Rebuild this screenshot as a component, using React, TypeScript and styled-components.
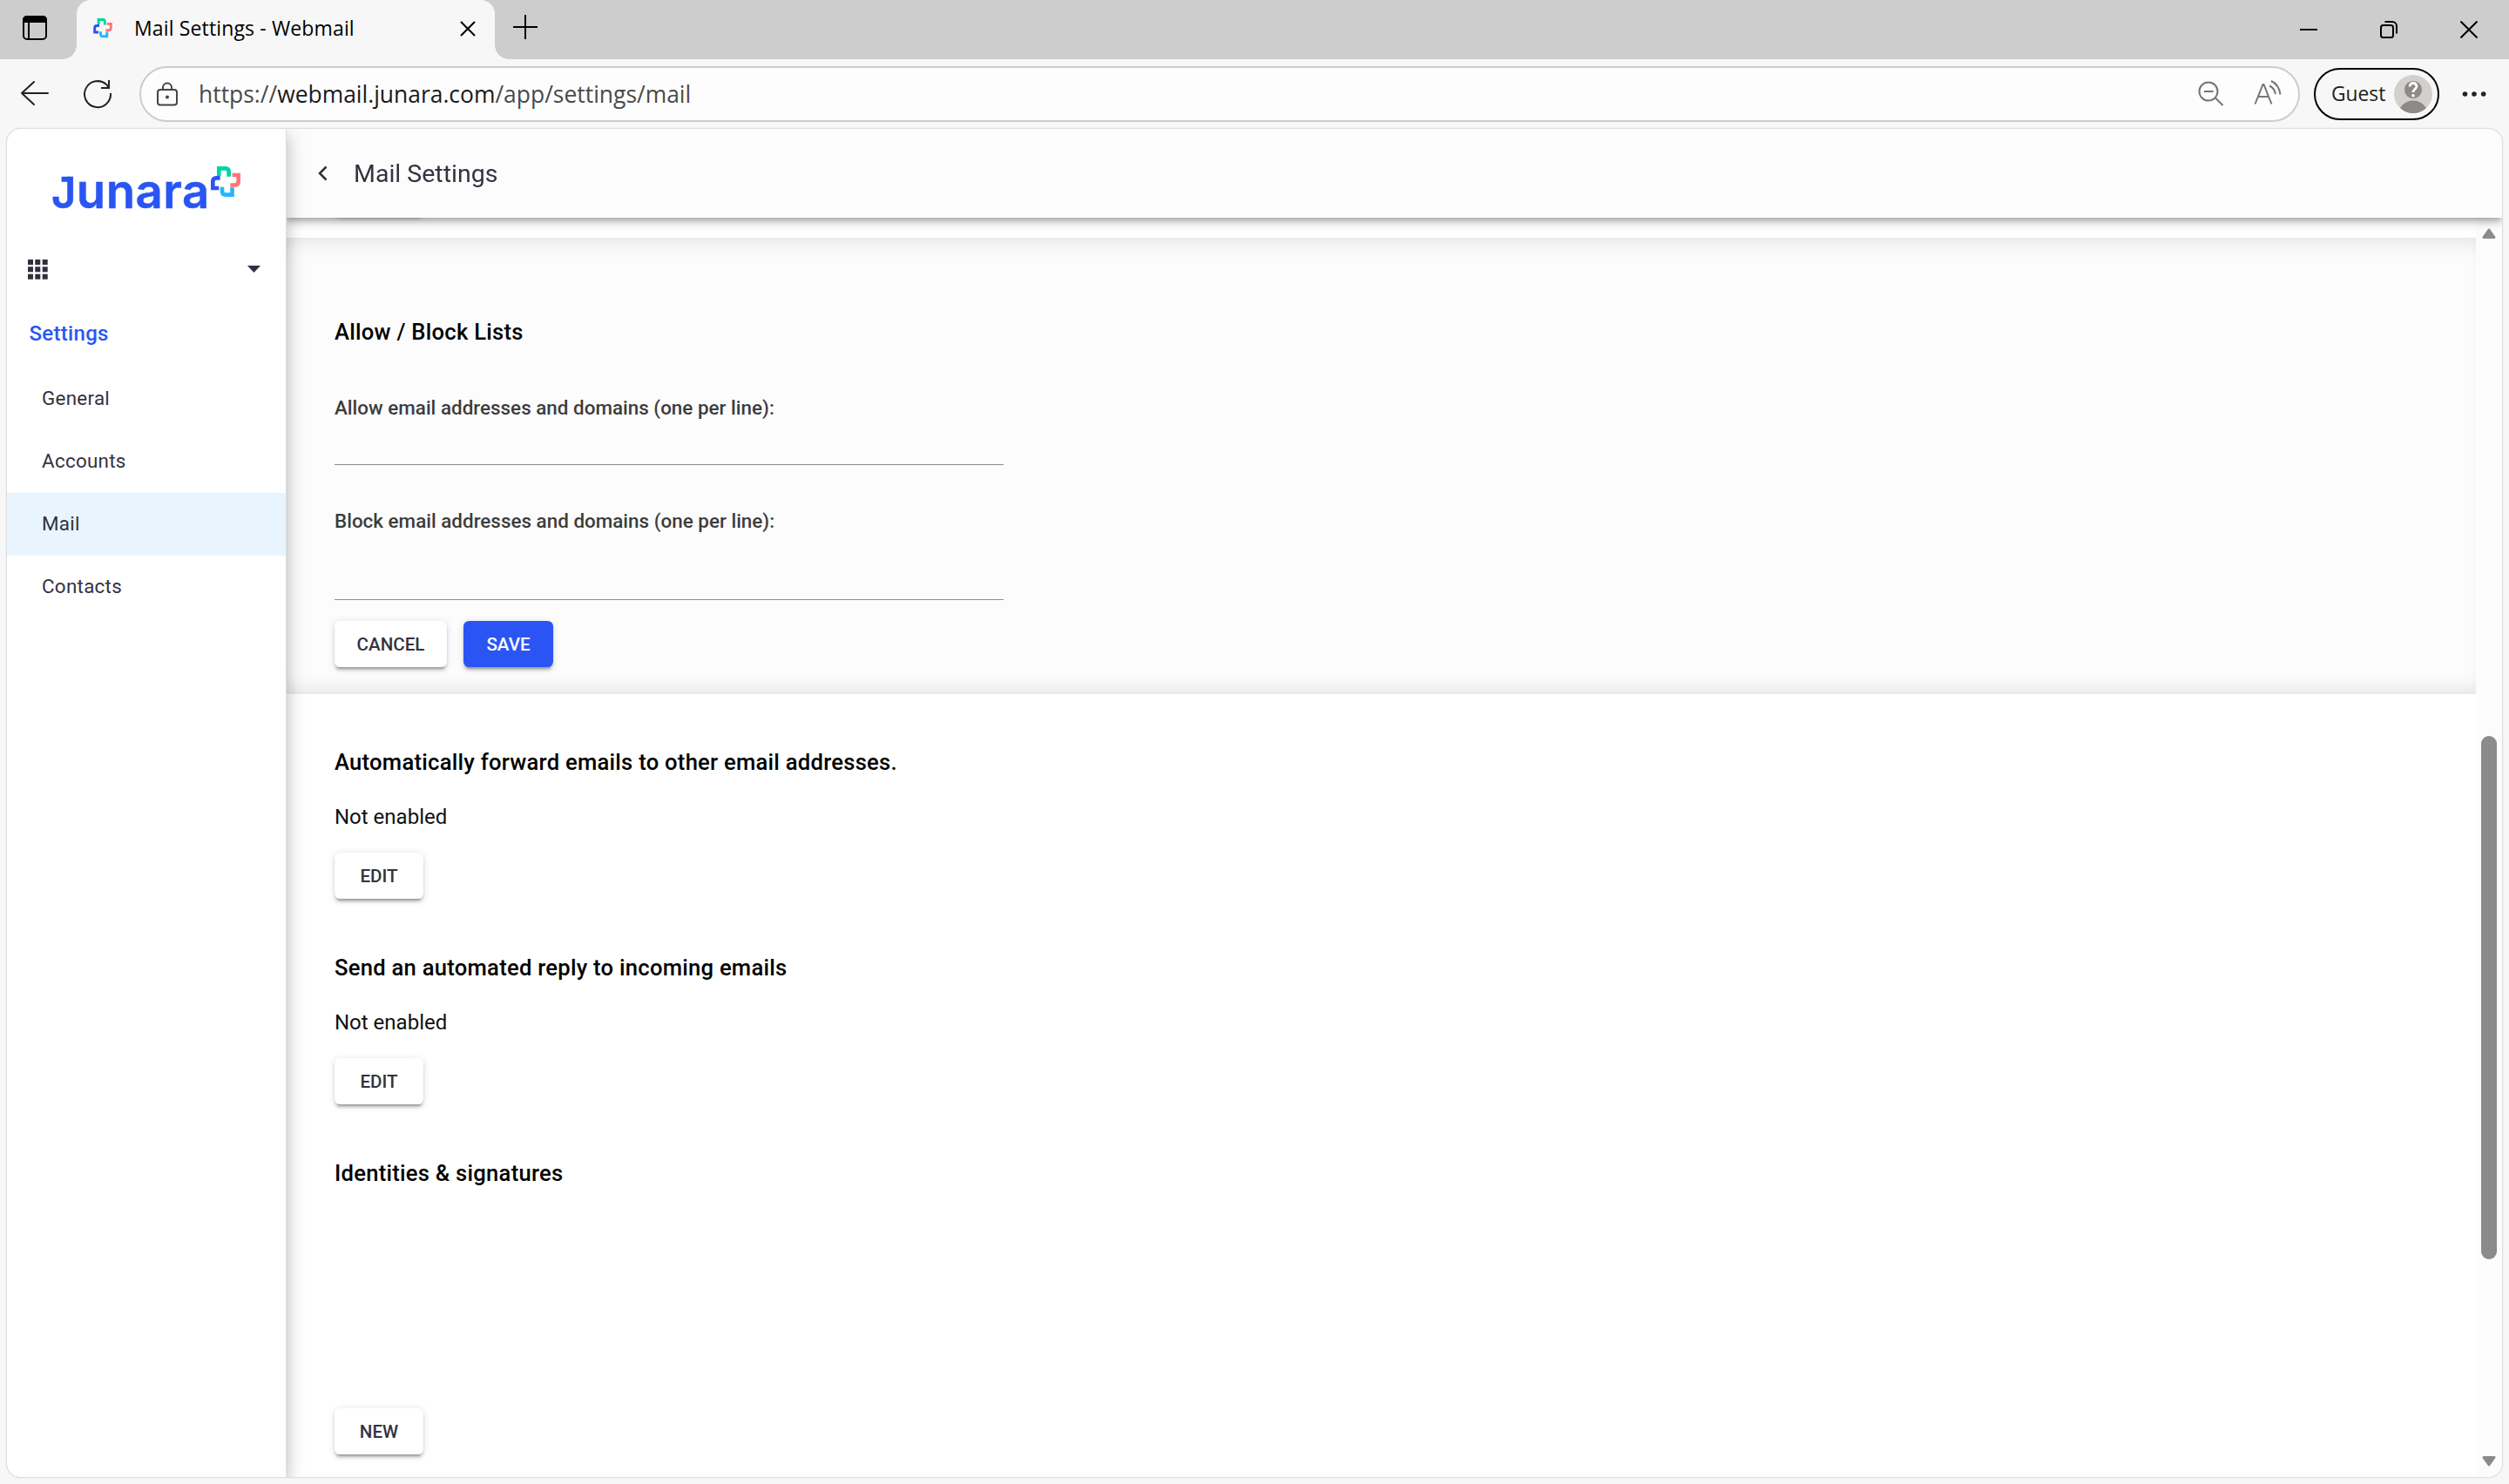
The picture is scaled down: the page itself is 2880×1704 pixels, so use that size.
import React from "react";
import styled, { createGlobalStyle, css } from "styled-components";

const ui = `Roboto, "Liberation Sans", sans-serif`;
const chrome = `"Open Sans", "Noto Sans", "Liberation Sans", sans-serif`;

const GlobalStyle = createGlobalStyle`
  *, *::before, *::after { box-sizing: border-box; }
  html, body { margin: 0; padding: 0; }
  body { width: 2880px; height: 1704px; overflow: hidden; background: #f7f7f7; }
  button, input { font: inherit; margin: 0; }
`;

const Window = styled.div`
  display: flex;
  flex-direction: column;
  width: 2880px;
  height: 1704px;
  background: #f7f7f7;
  font-family: ${ui};
`;

/* ---------- title bar ---------- */
const TitleBar = styled.div`
  display: flex;
  height: 68px;
  background: #cdcdcd;
  color: #000;
`;
const TabActions = styled.div`
  width: 88px;
  padding: 18px 0 0 26px;
`;
const Tab = styled.div`
  position: relative;
  display: flex;
  width: 480px;
  height: 68px;
  background: #f7f7f7;
  border-radius: 16px 16px 0 0;
  &::before, &::after {
    content: "";
    position: absolute;
    bottom: 0;
    width: 16px;
    height: 16px;
  }
  &::before { left: -16px; background: radial-gradient(circle at 0 0, transparent 15.5px, #f7f7f7 16px); }
  &::after { right: -16px; background: radial-gradient(circle at 100% 0, transparent 15.5px, #f7f7f7 16px); }
`;
const TabIcon = styled.div`
  width: 66px;
  padding: 21px 0 0 18.5px;
`;
const TabTitle = styled.div`
  flex: 1;
  font: 400 23px/64px ${chrome};
  letter-spacing: 0.14px;
  white-space: nowrap;
`;
const TabClose = styled.div`
  width: 40px;
  padding-top: 24px;
`;
const NewTab = styled.div`
  flex: 1;
  padding: 16px 0 0 20px;
`;
const WindowControls = styled.div`
  display: flex;
  gap: 72px;
  padding: 24px 36px 0 0;
`;

/* ---------- address bar ---------- */
const Toolbar = styled.div`
  display: flex;
  align-items: center;
  height: 80px;
  padding: 0 18px 0 22px;
  color: #222;
`;
const NavIcon = styled.div<{ $gap: number }>`
  display: flex;
  width: 36px;
  margin-right: ${(p) => p.$gap}px;
`;
const AddressBar = styled.div`
  display: flex;
  align-items: center;
  width: 2480px;
  height: 64px;
  padding: 0 19px 0 17px;
  border: 2px solid #cdcdcd;
  border-radius: 32px;
  background: #fdfdfd;
  color: #757575;
`;
const Url = styled.div`
  flex: 1;
  margin-left: 23px;
  font: 400 26.45px/60px ${chrome};
  color: #4a4a4a;
  white-space: nowrap;
`;
const Domain = styled.span`
  color: #1a1a1a;
`;
const Profile = styled.div`
  display: flex;
  align-items: center;
  justify-content: space-between;
  width: 144px;
  height: 60px;
  margin-left: 16px;
  padding: 0 6px 0 18px;
  border: 2px solid #000;
  border-radius: 30px;
  font: 400 22.8px/56px ${chrome};
  color: #222;
`;
const MoreIcon = styled.div`
  display: flex;
  margin-left: 26px;
`;

/* ---------- page ---------- */
const Page = styled.div`
  display: flex;
  width: 2864px;
  height: 1548px;
  margin: 0 8px;
  border-radius: 16px;
  overflow: hidden;
  background: #fff;
`;
const PageFrame = styled.div`
  width: 2880px;
  height: 1556px;
  filter: drop-shadow(0 0 1px rgba(0, 0, 0, 0.28));
`;
const Sidebar = styled.aside`
  position: relative;
  z-index: 3;
  width: 320px;
  background: #fff;
  box-shadow: 1px 0 0 #dedede, 0 8px 8px -4.8px rgba(0, 0, 0, 0.2),
    0 12.8px 16px 1.6px rgba(0, 0, 0, 0.14), 0 4.8px 22.4px 3.2px rgba(0, 0, 0, 0.12);
`;
const LogoBox = styled.div`
  height: 125px;
  padding: 32px 0 0 42px;
`;
const AppSwitcher = styled.div`
  display: flex;
  align-items: center;
  justify-content: space-between;
  height: 72px;
  padding: 0 29px 0 24px;
`;
const NavTitle = styled.div`
  height: 77px;
  padding-left: 25.5px;
  font-size: 24px;
  font-weight: 500;
  line-height: 76px;
  letter-spacing: 0.3px;
  color: #2a55f4;
`;
const NavItem = styled.div<{ $active?: boolean }>`
  height: 72px;
  padding-left: 40px;
  font-size: 22.4px;
  line-height: 71px;
  letter-spacing: 0.28px;
  color: #33333f;
  background: ${(p) => (p.$active ? "#e8f5fe" : "transparent")};
`;
const Main = styled.main`
  display: flex;
  flex-direction: column;
  width: 2544px;
`;
const Header = styled.header`
  position: relative;
  z-index: 2;
  display: flex;
  align-items: center;
  height: 102px;
  padding-left: 36px;
  background: #fcfcfc;
  box-shadow: 0 3.2px 6.4px -1.6px rgba(0, 0, 0, 0.2), 0 6.4px 8px 0 rgba(0, 0, 0, 0.14),
    0 1.6px 16px 0 rgba(0, 0, 0, 0.12);
`;
const HeaderTitle = styled.h1`
  margin: 2px 0 0 28px;
  font-size: 28.5px;
  font-weight: 400;
  line-height: 100px;
  color: #33333f;
`;
const Body = styled.div`
  display: flex;
  height: 1446px;
`;
const Content = styled.div`
  width: 2514px;
  overflow: hidden;
`;
const ScrolledOff = styled.div`
  display: flow-root;
  height: 23px;
  padding-left: 56px;
`;
const Panel = styled.section`
  height: 524px;
  padding: 88px 0 0 56px;
  background: #fcfcfc;
  box-shadow: inset 0 18px 26px -18px rgba(0, 0, 0, 0.15), inset 0 -18px 26px -18px rgba(0, 0, 0, 0.15);
`;
const Plain = styled.div`
  padding: 58px 0 0 56px;
`;
const Heading = styled.h2`
  margin: 0;
  font-size: 25.6px;
  font-weight: 500;
  line-height: 40px;
  letter-spacing: 0.26px;
  color: #000;
`;
const Label = styled.label<{ $top: number }>`
  display: block;
  margin-top: ${(p) => p.$top}px;
  font-size: 22.4px;
  font-weight: 500;
  line-height: 32px;
  letter-spacing: 0.02px;
  color: #3c3c3c;
`;
const Field = styled.div<{ $height: number }>`
  width: 768px;
  height: ${(p) => p.$height}px;
  border-bottom: 1px solid #8c8c8c;
`;
const Actions = styled.div`
  display: flex;
  gap: 19px;
  margin-top: 24px;
`;
const Setting = styled.section`
  height: 236px;
`;
const Status = styled.p`
  margin: 25px 0 23px;
  font-size: 24px;
  line-height: 36px;
  color: #111;
`;
const Button = styled.button<{ $primary?: boolean; $width?: number }>`
  display: block;
  width: ${(p) => p.$width ?? 102}px;
  height: 53px;
  padding: 0;
  border: 0;
  border-radius: 6.4px;
  background: #fff;
  color: #33333f;
  font-family: ${ui};
  font-size: 20.6px;
  font-weight: 500;
  line-height: 55px;
  text-align: center;
  box-shadow: 0 4.8px 1.6px -3.2px rgba(0, 0, 0, 0.2), 0 3.2px 3.2px 0 rgba(0, 0, 0, 0.14),
    0 1.6px 8px 0 rgba(0, 0, 0, 0.12);
  ${(p) => p.$primary && css`background: #2a55f4; color: #fff;`}
`;
const HiddenButton = styled(Button)`
  margin-top: -56px;
`;
const Identities = styled.section`
  display: flex;
  flex-direction: column;
  gap: 250px;
`;
const ScrollTrack = styled.div`
  display: flex;
  flex-direction: column;
  align-items: center;
  width: 30px;
  padding: 12px 0;
  background: #fcfcfc;
`;
const Thumb = styled.div`
  width: 18px;
  height: 601px;
  margin: 571px 0 226px;
  border-radius: 9px;
  background: #8b8b8b;
`;

/* ---------- drawings ---------- */
const MarkPaths = () => (
  <g fill="none" strokeWidth="14">
    <path stroke="#00d3a5" d="M604 66V40H627Q638 40 638 53V68" />
    <path stroke="#ff7575" d="M650 63H671V84Q671 97.500 659 97.500H643" />
    <path stroke="#27b6ff" d="M649.500 106V131H627Q615 131 615 118V104" />
    <path stroke="#2a55f4" d="M604 108H583V86Q583 73 595 73H608" />
  </g>
);
const Mark = ({ size }: { size: number }) => (
  <svg width={size} height={size * 1.03} viewBox="575 33 104 106">
    <MarkPaths />
  </svg>
);
const Logo = () => (
  <svg width="240" height="80" viewBox="0 0 240 80">
    <g fontFamily="Inter, sans-serif" fontWeight="600" fill="#2a55f4" stroke="#2a55f4" strokeWidth="0.500">
      <text x="9" y="58.500" fontSize="49">J</text>
      <text x="37.800" y="58.500" fontSize="54.500" letterSpacing="0.500">unara</text>
    </g>
    <rect x="20.600" y="22.800" width="9" height="6" fill="#2a55f4" />
    <g transform="scale(0.33333)"><MarkPaths /></g>
  </svg>
);
const ReloadIcon = () => (
  <svg width="36" height="36" viewBox="0 0 36 36" fill="none" stroke="#222" strokeWidth="2">
    <path d="M33 17a15 15 0 1 1-4.500-9.600L31 10.500M31 2v9h-9" />
  </svg>
);
const LockIcon = () => (
  <svg width="26" height="30" viewBox="0 0 26 30" fill="none" stroke="#444" strokeWidth="2">
    <rect x="2" y="10" width="22" height="17.500" rx="3" />
    <path d="M8 10V7.500a5 5 0 0 1 10 0V10" />
    <circle cx="13" cy="18.500" r="2" fill="#444" stroke="none" />
  </svg>
);
const AddressIcons = () => (
  <svg width="96" height="34" viewBox="0 0 96 34" fill="none" stroke="#757575" strokeWidth="2">
    <circle cx="12" cy="14" r="10.500" />
    <path d="M7 14h10.500M20 21.500l8.500 8.500" />
    <path d="M65.500 28.500L74.500 6h1L84.500 28.500M69 20h12.500" />
    <path d="M82 7.500q6 3 7 9.500M84 2q9 4 10.500 15.500" />
  </svg>
);
const Avatar = () => (
  <svg width="44" height="44" viewBox="0 0 44 44">
    <circle cx="22" cy="22" r="22" fill="#d1d0cd" />
    <path d="M7 38a17.500 17.500 0 0 1 30 0a21.900 21.900 0 0 1-30 0z" fill="#8c8986" />
    <circle cx="22" cy="17" r="10.500" fill="#8c8986" stroke="#d1d0cd" strokeWidth="1" />
    <path d="M18 13.500c0-5.500 8-5 8-.5 0 3.500-4 3-4 7" fill="none" stroke="#fff" strokeWidth="2.800" />
    <circle cx="22" cy="23.700" r="1.800" fill="#fff" />
  </svg>
);

export default function App() {
  return (
    <>
      <GlobalStyle />
      <Window>
        <TitleBar>
          <TabActions>
            <svg width="28" height="28" viewBox="0 0 28 28" fill="none">
              <rect x="1" y="1" width="26" height="26" rx="4" stroke="#000" strokeWidth="2" />
              <path d="M0 8V5a5 5 0 0 1 5-5h18a5 5 0 0 1 5 5v3z" fill="#000" />
              <path d="M7 8v19" stroke="#000" strokeWidth="2" />
            </svg>
          </TabActions>
          <Tab>
            <TabIcon><Mark size={22} /></TabIcon>
            <TabTitle>Mail Settings - Webmail</TabTitle>
            <TabClose>
              <svg width="18" height="18" viewBox="0 0 18 18" stroke="#000" strokeWidth="2">
                <path d="M1 1l16 16M17 1L1 17" />
              </svg>
            </TabClose>
          </Tab>
          <NewTab>
            <svg width="30" height="30" viewBox="0 0 30 30" stroke="#000" strokeWidth="2">
              <path d="M15 1v28M1 15h28" />
            </svg>
          </NewTab>
          <WindowControls>
            <svg width="20" height="20" viewBox="0 0 20 20"><path d="M0 10h20" stroke="#000" strokeWidth="2" /></svg>
            <svg width="20" height="20" viewBox="0 0 20 20" fill="none" stroke="#000" strokeWidth="2">
              <rect x="1" y="5" width="14" height="14" rx="2.500" />
              <path d="M5.500 1H14a5 5 0 0 1 5 5v8.500" />
            </svg>
            <svg width="20" height="20" viewBox="0 0 20 20"><path d="M.5.5l19 19M19.500.5l-19 19" stroke="#000" strokeWidth="2" /></svg>
          </WindowControls>
        </TitleBar>

        <Toolbar>
          <NavIcon $gap={36}>
            <svg width="36" height="36" viewBox="0 0 36 36" fill="none" stroke="#222" strokeWidth="2" strokeLinecap="round" strokeLinejoin="round">
              <path d="M33 17H3M17 4L3 17l14 13" />
            </svg>
          </NavIcon>
          <NavIcon $gap={30}><ReloadIcon /></NavIcon>
          <AddressBar>
            <LockIcon />
            <Url>https://<Domain>webmail.junara.com</Domain>/app/settings/mail</Url>
            <AddressIcons />
          </AddressBar>
          <Profile>
            Guest
            <Avatar />
          </Profile>
          <MoreIcon>
            <svg width="32" height="8" viewBox="0 0 32 8" fill="#222">
              <circle cx="3.500" cy="4" r="2.800" /><circle cx="14" cy="4" r="2.800" /><circle cx="24.700" cy="4" r="2.800" />
            </svg>
          </MoreIcon>
        </Toolbar>

        <PageFrame>
          <Page>
            <Sidebar>
              <LogoBox><Logo /></LogoBox>
              <AppSwitcher>
                <svg width="23" height="23" viewBox="0 0 23 23" fill="#2f2f3d">
                  {[0, 8.3, 16.7].map((y) => [0, 8.3, 16.7].map((x) => (
                    <rect key={`${x}-${y}`} x={x} y={y} width="6" height="6" />
                  )))}
                </svg>
                <svg width="15" height="8" viewBox="0 0 15 8"><path d="M0 0h15L7.500 8z" fill="#2f2f3d" /></svg>
              </AppSwitcher>
              <NavTitle>Settings</NavTitle>
              <NavItem>General</NavItem>
              <NavItem>Accounts</NavItem>
              <NavItem $active>Mail</NavItem>
              <NavItem>Contacts</NavItem>
            </Sidebar>
            <Main>
              <Header>
                <svg width="14" height="18" viewBox="0 0 14 18" fill="none" stroke="#2f2f3d" strokeWidth="2.500">
                  <path d="M10.500 1.500L3 9l7.500 7.500" />
                </svg>
                <HeaderTitle>Mail Settings</HeaderTitle>
              </Header>
              <Body>
                <Content>
                  <ScrolledOff><HiddenButton tabIndex={-1} /></ScrolledOff>
                  <Panel>
                    <Heading>Allow / Block Lists</Heading>
                    <Label $top={51}>Allow email addresses and domains (one per line):</Label>
                    <Field $height={50} />
                    <Label $top={48}>Block email addresses and domains (one per line):</Label>
                    <Field $height={75} />
                    <Actions>
                      <Button $width={129}>CANCEL</Button>
                      <Button $width={103} $primary>SAVE</Button>
                    </Actions>
                  </Panel>
                  <Plain>
                    <Setting>
                      <Heading>Automatically forward emails to other email addresses.</Heading>
                      <Status>Not enabled</Status>
                      <Button>EDIT</Button>
                    </Setting>
                    <Setting>
                      <Heading>Send an automated reply to incoming emails</Heading>
                      <Status>Not enabled</Status>
                      <Button>EDIT</Button>
                    </Setting>
                    <Identities>
                      <Heading>Identities &amp; signatures</Heading>
                      <Button>NEW</Button>
                    </Identities>
                  </Plain>
                </Content>
                <ScrollTrack>
                  <svg width="16" height="12" viewBox="0 0 16 12"><path d="M2 10.500L8 2l6 8.500z" fill="#8b8b8b" stroke="#8b8b8b" strokeWidth="3" strokeLinejoin="round" /></svg>
                  <Thumb />
                  <svg width="16" height="12" viewBox="0 0 16 12"><path d="M2 1.500L8 10l6-8.500z" fill="#8b8b8b" stroke="#8b8b8b" strokeWidth="3" strokeLinejoin="round" /></svg>
                </ScrollTrack>
              </Body>
            </Main>
          </Page>
        </PageFrame>
      </Window>
    </>
  );
}
